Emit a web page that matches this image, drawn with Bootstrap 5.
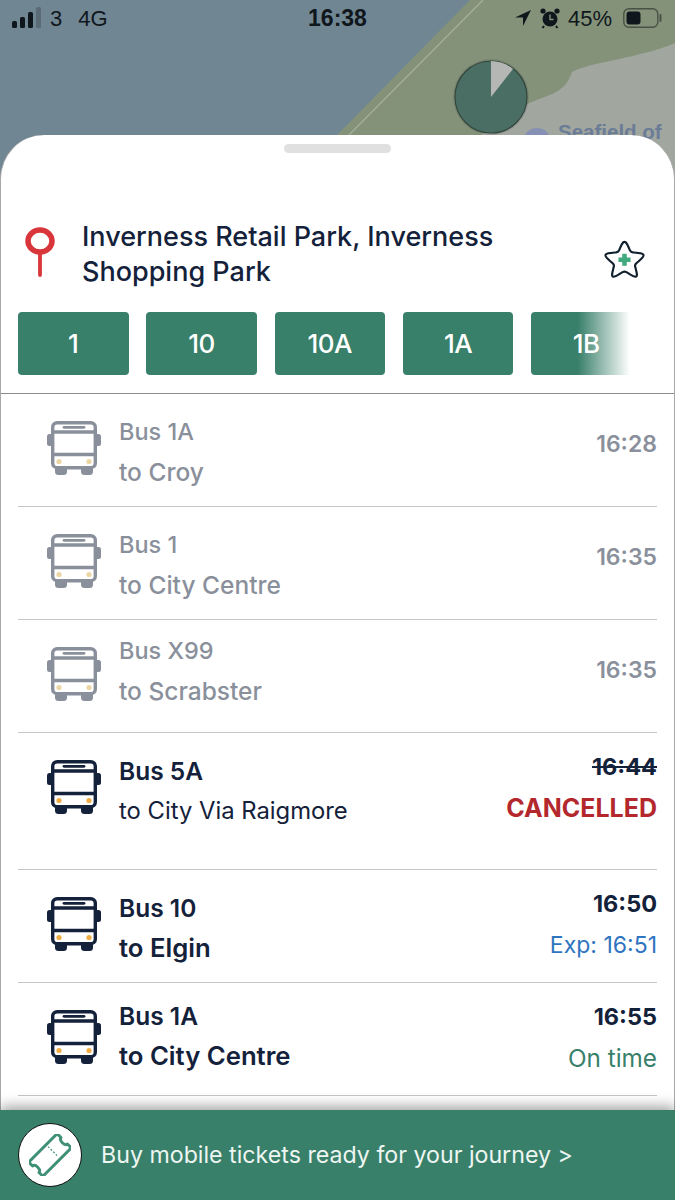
<!DOCTYPE html>
<html lang="en">

<head>
    <meta charset="UTF-8">
    <meta name="viewport" content="width=device-width, initial-scale=1.0">
    <title>Inverness Retail Park</title>
    <link href="https://cdn.jsdelivr.net/npm/bootstrap@5.3.2/dist/css/bootstrap.min.css" rel="stylesheet">
    <style>
        body {
            width: 675px;
            height: 1200px;
            overflow: hidden;
            font-family: Inter, "Liberation Sans", sans-serif;
            color: #14213a;
            background-color: #fff;
            --lamp: #f0ac45;
        }

        .map-area {
            height: 200px;
            position: relative;
            background-color: #708693;
        }

        .map-art {
            position: absolute;
            left: 0;
            top: 0;
        }

        .status-bar {
            position: relative;
            height: 36px;
            padding: 0 12px;
            font-family: "Liberation Sans", sans-serif;
            font-size: 22px;
            color: #10171c;
        }

        .status-left,
        .status-right {
            width: 260px;
        }

        .status-time {
            font-size: 23px;
            font-weight: 700;
        }

        .status-pct {
            margin-left: 4px;
            margin-right: 11px;
        }

        .sheet {
            height: 1065px;
            margin-top: -65px;
            background-color: #fff;
            border-radius: 44px 44px 0 0;
            border-left: 1px solid #a8a8a8;
            border-right: 1px solid #a8a8a8;
            position: relative;
        }

        .sheet-handle {
            width: 107px;
            height: 9px;
            border-radius: 5px;
            background-color: #e0e0e0;
            position: absolute;
            left: 283px;
            top: 9px;
        }

        .stop-head {
            padding: 84px 29px 0 24px;
            height: 177px;
        }

        .stop-name {
            font-size: 27px;
            line-height: 35px;
            font-weight: 500;
            margin: 0 0 0 27px;
            width: 460px;
            color: #14213a;
        }

        .stop-star {
            margin-top: 20px;
        }

        .route-row {
            padding-left: 17px;
            gap: 17.75px;
            width: 629px;
            height: 63px;
            overflow: hidden;
            position: relative;
        }

        .route-chip {
            flex: 0 0 110.5px;
            height: 63px;
            background-color: #39806a;
            color: #fff;
            font-size: 26px;
            font-weight: 500;
            letter-spacing: -0.5px;
            border-radius: 4px;
        }

        .route-fade {
            position: absolute;
            right: 0;
            top: 0;
            width: 52px;
            height: 63px;
            background: linear-gradient(to right, rgba(255, 255, 255, 0), #fff);
        }

        .trip-list {
            margin-top: 18px;
            border-top: 1px solid #8c8c8c;
            padding: 0 17px;
        }

        .trip-row {
            height: 113px;
            border-bottom: 1px solid #c6c6c6;
            padding-left: 29px;
        }

        .trip-row.tall {
            height: 137px;
        }

        .trip-text {
            margin-left: 18px;
            padding-top: 20px;
        }

        .trip-text.raised {
            padding-top: 13px;
        }

        .trip-text.raised-some {
            padding-top: 15px;
        }

        .trip-title {
            font-size: 24.5px;
            line-height: 36px;
            font-weight: 600;
        }

        .trip-dest {
            font-size: 23.8px;
            line-height: 36px;
            margin-top: 4px;
        }

        .trip-dest.strong {
            font-size: 25.7px;
            font-weight: 600;
        }

        .trip-time {
            text-align: right;
            padding-top: 16px;
            font-size: 23.5px;
            line-height: 36px;
            font-weight: 700;
        }

        .trip-past {
            color: #8a909b;
            --lamp: #ecd6a4;
        }

        .trip-past .trip-title {
            font-size: 23.5px;
            font-weight: 500;
        }

        .trip-past .trip-dest {
            font-size: 24.5px;
            font-weight: 500;
        }

        .trip-past .trip-time {
            padding-top: 32px;
            font-size: 23px;
            font-weight: 600;
        }

        .bus-icon {
            margin-top: 27px;
            flex: 0 0 54px;
        }

        .bus-lamp {
            fill: var(--lamp);
        }

        .trip-note {
            font-size: 23px;
            line-height: 36px;
            font-weight: 400;
            margin-top: 5px;
        }

        .note-cancel {
            color: #b3272d;
            font-weight: 700;
            font-size: 25px;
        }

        .note-exp {
            color: #2f74c0;
        }

        .note-ok {
            color: #39806a;
            font-size: 24.3px;
        }

        .ticket-bar {
            position: absolute;
            left: -1px;
            right: -1px;
            bottom: 0;
            height: 90px;
            background-color: #39806a;
            color: #eef6f2;
            font-size: 23.2px;
            padding-left: 18px;
            box-shadow: 0 -4px 12px rgba(0, 0, 0, 0.35);
        }

        .ticket-disc {
            width: 64px;
            height: 64px;
            background-color: #fff;
            border: 1.5px solid #111;
            border-radius: 50%;
            margin-right: 19px;
            flex-shrink: 0;
        }
    </style>
</head>

<body>
    <svg width="0" height="0" class="position-absolute">
        <symbol id="bus" viewBox="0 0 54 54">
            <rect x="0" y="13" width="6" height="12" rx="2.5" fill="currentColor" />
            <rect x="48" y="13" width="6" height="12" rx="2.5" fill="currentColor" />
            <rect x="8" y="45" width="12" height="9" rx="3.5" fill="currentColor" />
            <rect x="34" y="45" width="12" height="9" rx="3.5" fill="currentColor" />
            <rect x="5.700" y="1.700" width="42.600" height="45" rx="4.500" fill="#fff" stroke="currentColor" stroke-width="3.400" />
            <path d="M5.700 11H48.300M5.700 33.500H48.300" stroke="currentColor" stroke-width="3.400" />
            <path d="M17 6.300H37" stroke="currentColor" stroke-width="2.800" stroke-linecap="round" />
            <circle class="bus-lamp" cx="12" cy="40.500" r="2.600" />
            <circle class="bus-lamp" cx="42" cy="40.500" r="2.600" />
        </symbol>
    </svg>

    <div class="map-area">
        <svg class="map-art" width="675" height="200" viewBox="0 0 675 200">
            <polygon points="470,0 675,0 675,200 273,200" fill="#84927a" />
            <path d="M483 0L349 135L290 200" stroke="#a3ac9a" stroke-width="1.500" fill="none" />
            <path d="M675 43C640 58 590 62 572 72C565 95 545 95 525 105C505 118 490 125 470 145L420 200H675Z" fill="#a1a69f" />
            <circle cx="537" cy="142" r="14" fill="#8590b4" />
            <text x="558" y="139" font-family="Liberation Sans, sans-serif" font-size="20.500" font-weight="700" fill="#6b7c97">Seafield of</text>
            <circle cx="491" cy="97" r="38" fill="#000" opacity="0.1" />
            <circle cx="491" cy="97" r="36" fill="#4a6e63" stroke="#33473f" stroke-width="1.200" />
            <path d="M491 97V61A36 36 0 0 1 513 69Z" fill="#b4b7b4" />
        </svg>
        <div class="status-bar d-flex align-items-center justify-content-between">
            <div class="status-left d-flex align-items-center">
                <svg width="30" height="22" viewBox="0 0 30 22" class="me-2">
                    <rect x="0" y="14" width="5" height="7" rx="1.500" fill="#10171c" />
                    <rect x="8" y="10" width="5" height="11" rx="1.500" fill="#10171c" />
                    <rect x="16" y="5" width="5" height="16" rx="1.500" fill="#10171c" />
                    <rect x="24" y="0" width="5" height="21" rx="1.500" fill="#5a6b75" />
                </svg>
                <span class="me-3">3</span><span>4G</span>
            </div>
            <div class="status-time">16:38</div>
            <div class="status-right d-flex align-items-center justify-content-end">
                <svg width="18" height="18" viewBox="0 0 18 18" class="me-2">
                    <path d="M17 1L1 8.500H9V17Z" fill="#10171c" />
                </svg>
                <svg width="20" height="22" viewBox="0 0 20 22" class="me-1">
                    <circle cx="10" cy="12" r="7.500" fill="#10171c" />
                    <circle cx="3" cy="4" r="2.600" fill="#10171c" />
                    <circle cx="17" cy="4" r="2.600" fill="#10171c" />
                    <path d="M10 7.500V12.500H13.500" stroke="#84927a" stroke-width="1.400" fill="none" />
                    <path d="M4 19L2.500 21M16 19L17.500 21" stroke="#10171c" stroke-width="2" />
                </svg>
                <span class="status-pct">45%</span>
                <svg width="40" height="20" viewBox="0 0 40 20">
                    <rect x="0.800" y="0.800" width="34" height="18.400" rx="5" fill="none" stroke="#4a5147" stroke-width="1.400" />
                    <rect x="3.500" y="3.500" width="14" height="13" rx="3" fill="#10171c" />
                    <path d="M37.500 7V13" stroke="#4a5147" stroke-width="2" stroke-linecap="round" />
                </svg>
            </div>
        </div>
    </div>

    <div class="sheet">
        <div class="sheet-handle"></div>

        <div class="stop-head d-flex align-items-start">
            <svg width="30" height="50" viewBox="0 0 30 50" class="flex-shrink-0 mt-2">
                <path d="M15 24V48" stroke="#d8363b" stroke-width="3.800" stroke-linecap="round" />
                <ellipse cx="15" cy="14" rx="12" ry="11" fill="#fff" stroke="#d8363b" stroke-width="5.500" />
            </svg>
            <h1 class="stop-name">Inverness Retail Park, Inverness Shopping Park</h1>
            <svg width="41" height="40" viewBox="0 0 42 40" class="stop-star ms-auto flex-shrink-0">
                <path d="M21 2.500C23 2.500 24 5 26.500 11C27 12.500 28 13 29.500 13.200C36 13.800 40 14 40.500 16C41 18 37.500 20.500 33 24.500C31.800 25.500 31.500 26.500 32 28C33.500 34 34.500 37 33 38C31 39 28 36.500 23 33.500C21.700 32.800 20.300 32.800 19 33.500C14 36.500 11 39 9 38C7.500 37 8.500 34 10 28C10.500 26.500 10.200 25.500 9 24.500C4.500 20.500 1 18 1.500 16C2 14 6 13.800 12.500 13.200C14 13 15 12.500 15.500 11C18 5 19 2.500 21 2.500Z" fill="#fff" stroke="#10202e" stroke-width="2.200" />
                <path d="M21 14.500V27M14.800 20.700H27.200" stroke="#42a97f" stroke-width="4.600" />
            </svg>
        </div>

        <div class="route-row d-flex">
            <div class="route-chip d-flex align-items-center justify-content-center">1</div>
            <div class="route-chip d-flex align-items-center justify-content-center">10</div>
            <div class="route-chip d-flex align-items-center justify-content-center">10A</div>
            <div class="route-chip d-flex align-items-center justify-content-center">1A</div>
            <div class="route-chip d-flex align-items-center justify-content-center">1B</div>
            <div class="route-fade"></div>
        </div>

        <div class="trip-list">
            <div class="trip-row trip-past d-flex">
                <svg class="bus-icon" width="54" height="54"><use href="#bus" /></svg>
                <div class="trip-text">
                    <div class="trip-title">Bus 1A</div>
                    <div class="trip-dest">to Croy</div>
                </div>
                <div class="trip-time ms-auto">16:28</div>
            </div>
            <div class="trip-row trip-past d-flex">
                <svg class="bus-icon" width="54" height="54"><use href="#bus" /></svg>
                <div class="trip-text">
                    <div class="trip-title">Bus 1</div>
                    <div class="trip-dest">to City Centre</div>
                </div>
                <div class="trip-time ms-auto">16:35</div>
            </div>
            <div class="trip-row trip-past d-flex">
                <svg class="bus-icon" width="54" height="54"><use href="#bus" /></svg>
                <div class="trip-text raised">
                    <div class="trip-title">Bus X99</div>
                    <div class="trip-dest">to Scrabster</div>
                </div>
                <div class="trip-time ms-auto">16:35</div>
            </div>
            <div class="trip-row tall d-flex">
                <svg class="bus-icon" width="54" height="54"><use href="#bus" /></svg>
                <div class="trip-text">
                    <div class="trip-title">Bus 5A</div>
                    <div class="trip-dest">to City Via Raigmore</div>
                </div>
                <div class="ms-auto text-end">
                    <div class="trip-time"><s>16:44</s></div>
                    <div class="trip-note note-cancel">CANCELLED</div>
                </div>
            </div>
            <div class="trip-row d-flex">
                <svg class="bus-icon" width="54" height="54"><use href="#bus" /></svg>
                <div class="trip-text">
                    <div class="trip-title">Bus 10</div>
                    <div class="trip-dest strong">to Elgin</div>
                </div>
                <div class="ms-auto text-end">
                    <div class="trip-time">16:50</div>
                    <div class="trip-note note-exp">Exp: 16:51</div>
                </div>
            </div>
            <div class="trip-row d-flex">
                <svg class="bus-icon" width="54" height="54"><use href="#bus" /></svg>
                <div class="trip-text raised-some">
                    <div class="trip-title">Bus 1A</div>
                    <div class="trip-dest strong">to City Centre</div>
                </div>
                <div class="ms-auto text-end">
                    <div class="trip-time">16:55</div>
                    <div class="trip-note note-ok">On time</div>
                </div>
            </div>
        </div>

        <div class="ticket-bar d-flex align-items-center">
            <div class="ticket-disc d-flex align-items-center justify-content-center">
                <svg width="42" height="42" viewBox="0 0 46 46">
                    <g transform="rotate(-45 23 23)" fill="none" stroke="#3f9077" stroke-width="3.200" stroke-linejoin="round">
                        <path d="M1 12H45V18C41 18.500 41 27.500 45 28V34H1V28C5 27.500 5 18.500 1 18Z" />
                        <path d="M28 15V31" stroke-width="1.400" stroke-dasharray="2 2" />
                    </g>
                </svg>
            </div>
            <span>Buy mobile tickets ready for your journey &gt;</span>
        </div>
    </div>

    <script src="https://cdn.jsdelivr.net/npm/bootstrap@5.3.2/dist/js/bootstrap.bundle.min.js"></script>
</body>

</html>
